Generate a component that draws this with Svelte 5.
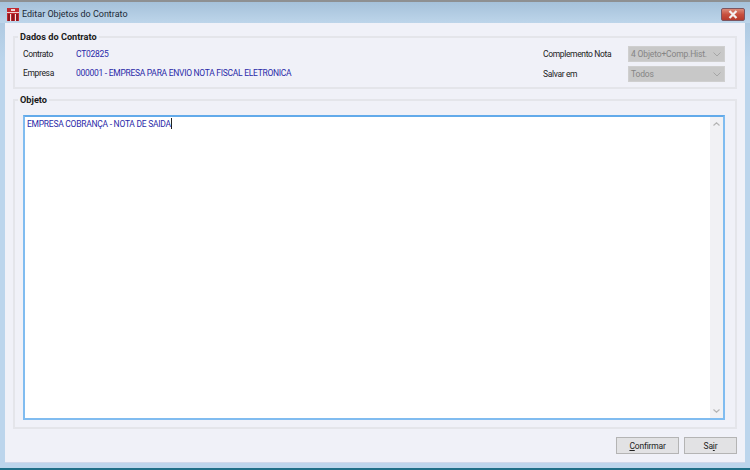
<script>
  const contrato = [
    { label: 'Contrato', value: 'CT02825' },
    { label: 'Empresa', value: '000001 - EMPRESA PARA ENVIO NOTA FISCAL ELETRONICA' }
  ];
  const opcoes = [
    { label: 'Complemento Nota', value: '4 Objeto+Comp.Hist.' },
    { label: 'Salvar em', value: 'Todos' }
  ];
</script>

<div class="window">
  <header class="titlebar">
    <svg class="logo" width="12" height="13" viewBox="0 0 12 13">
      <rect x="0" y="0" width="12" height="13" fill="#c22a30" />
      <rect x="4" y="1" width="4" height="2" fill="#f0d8d8" />
      <rect x="0" y="4" width="12" height="1" fill="#f0d0d0" />
      <rect x="3" y="6" width="1" height="7" fill="#f4e4e4" />
      <rect x="8" y="6" width="1" height="7" fill="#f4e4e4" />
      <rect x="1" y="6" width="2" height="7" fill="#8e1820" />
      <rect x="5" y="6" width="2" height="7" fill="#8e1820" />
      <rect x="9" y="6" width="2" height="7" fill="#8e1820" />
    </svg>
    <span class="title">Editar Objetos do Contrato</span>
    <button class="close" aria-label="Fechar">
      <svg width="10" height="9" viewBox="0 0 10 9">
        <path d="M1.5 1 L8.5 8 M8.5 1 L1.5 8" stroke="#f4f0f0" stroke-width="2.2" />
      </svg>
    </button>
  </header>

  <main class="body">
    <fieldset class="group dados">
      <legend>Dados do Contrato</legend>
      <div class="dados-rows">
        <div class="col-left">
          {#each contrato as row}
            <div class="row">
              <span class="label">{row.label}</span>
              <span class="value">{row.value}</span>
            </div>
          {/each}
        </div>
        <div class="col-right">
          {#each opcoes as op}
            <div class="row">
              <span class="label wide">{op.label}</span>
              <div class="select">
                <span>{op.value}</span>
                <svg width="8" height="5" viewBox="0 0 8 5">
                  <path d="M0.5 0.5 L4 4 L7.5 0.5" fill="none" stroke="#a6a6a6" />
                </svg>
              </div>
            </div>
          {/each}
        </div>
      </div>
    </fieldset>

    <fieldset class="group objeto">
      <legend>Objeto</legend>
      <div class="editor">
        <div class="text">EMPRESA COBRANÇA - NOTA DE SAIDA<i class="caret"></i></div>
        <div class="scroll">
          <svg width="7" height="4" viewBox="0 0 7 4">
            <path d="M0.5 3.5 L3.5 0.8 L6.5 3.5" fill="none" stroke="#b4b4b4" stroke-width="1.2" />
          </svg>
          <svg width="7" height="4" viewBox="0 0 7 4">
            <path d="M0.5 0.5 L3.5 3.2 L6.5 0.5" fill="none" stroke="#b4b4b4" stroke-width="1.2" />
          </svg>
        </div>
      </div>
    </fieldset>

    <footer class="actions">
      <button class="btn confirmar"><u>C</u>onfirmar</button>
      <button class="btn sair">Sa<u>i</u>r</button>
    </footer>
  </main>
  <div class="bottom"></div>
</div>

<style>
  :global(body) {
    margin: 0;
    background: #bcd4ea;
  }

  .window {
    width: 750px;
    height: 470px;
    display: flex;
    flex-direction: column;
    box-sizing: border-box;
    border-top: 2px solid #8e9092;
    background: linear-gradient(#a9c4dc, #bcd5ec 60px);
    font-family: Roboto, sans-serif;
    font-size: 8.5px;
    overflow: hidden;
  }

  .titlebar {
    height: 21px;
    flex: none;
    display: flex;
    align-items: flex-end;
    padding: 0 5px 2px 7px;
    box-sizing: border-box;
    background: linear-gradient(#a5c1da, #bdd5ea);
  }

  .logo {
    margin-right: 3px;
  }

  .title {
    color: #1c2a38;
    flex: 1;
    font-size: 9px;
    line-height: 13px;
  }

  .close {
    width: 24px;
    height: 13px;
    padding: 0;
    display: flex;
    align-items: center;
    justify-content: center;
    border: 1px solid #7c5560;
    border-radius: 2px;
    background: linear-gradient(#dc8a78, #c8503e 50%, #b53a2c);
  }

  .body {
    flex: 1;
    margin: 0 5px;
    padding: 8px 8px 0;
    min-height: 0;
    display: flex;
    flex-direction: column;
    background: #f0f1f8;
    border-bottom: 1px solid #cfd8ea;
  }

  .group {
    margin: 0;
    padding: 0;
    min-width: 0;
    border: 2px solid #e4e5ea;
    box-sizing: border-box;
  }

  legend {
    margin-left: 3px;
    padding: 0 2px;
    font-weight: bold;
    color: #1a1a1a;
    line-height: 11px;
    font-size: 9.2px;
  }

  .dados {
    height: 58px;
    flex: none;
  }

  .dados-rows {
    display: flex;
    justify-content: space-between;
    padding: 4px 10px 0 8px;
  }

  .col-left,
  .col-right {
    display: flex;
    flex-direction: column;
  }

  .col-left {
    gap: 3px;
  }

  .col-right {
    gap: 4px;
  }

  .row {
    display: flex;
    align-items: center;
    height: 16px;
    white-space: nowrap;
  }

  .label {
    width: 53px;
    color: #222;
    letter-spacing: -0.35px;
  }

  .label.wide {
    width: 85px;
  }

  .value {
    color: #2a2aa8;
    letter-spacing: -0.28px;
  }

  .select {
    width: 97px;
    height: 16px;
    box-sizing: border-box;
    display: flex;
    align-items: center;
    justify-content: space-between;
    padding: 0 3px 0 2px;
    background: #c8c8c8;
    color: #858585;
    border: 1px solid #cfcfcf;
    letter-spacing: -0.15px;
  }

  .objeto {
    margin-top: 5px;
    height: 335px;
    flex: none;
  }

  .editor {
    margin: 10px 10px 0 8px;
    height: 305px;
    box-sizing: border-box;
    border: 2px solid #80bcf0;
    border-top-color: #62aaea;
    background: #fff;
    display: flex;
  }

  .text {
    flex: 1;
    padding: 1px 2px;
    color: #2a2aa8;
    letter-spacing: -0.26px;
  }

  .caret {
    display: inline-block;
    width: 1px;
    height: 11px;
    background: #222;
    vertical-align: -2px;
  }

  .scroll {
    width: 13px;
    background: #f1f1f4;
    display: flex;
    flex-direction: column;
    align-items: center;
    justify-content: space-between;
    padding: 5px 0;
    box-sizing: border-box;
  }

  .actions {
    display: flex;
    justify-content: flex-end;
    gap: 5px;
    margin-top: 8px;
  }

  .btn {
    height: 17px;
    padding: 0;
    font: inherit;
    color: #222;
    background: #e2e2e4;
    border: 1px solid #b4b4b4;
    letter-spacing: -0.2px;
  }

  .confirmar {
    width: 63px;
  }

  .sair {
    width: 53px;
  }

  .bottom {
    height: 2px;
    flex: none;
    margin-top: 5px;
    background: #1f6f88;
  }
</style>
